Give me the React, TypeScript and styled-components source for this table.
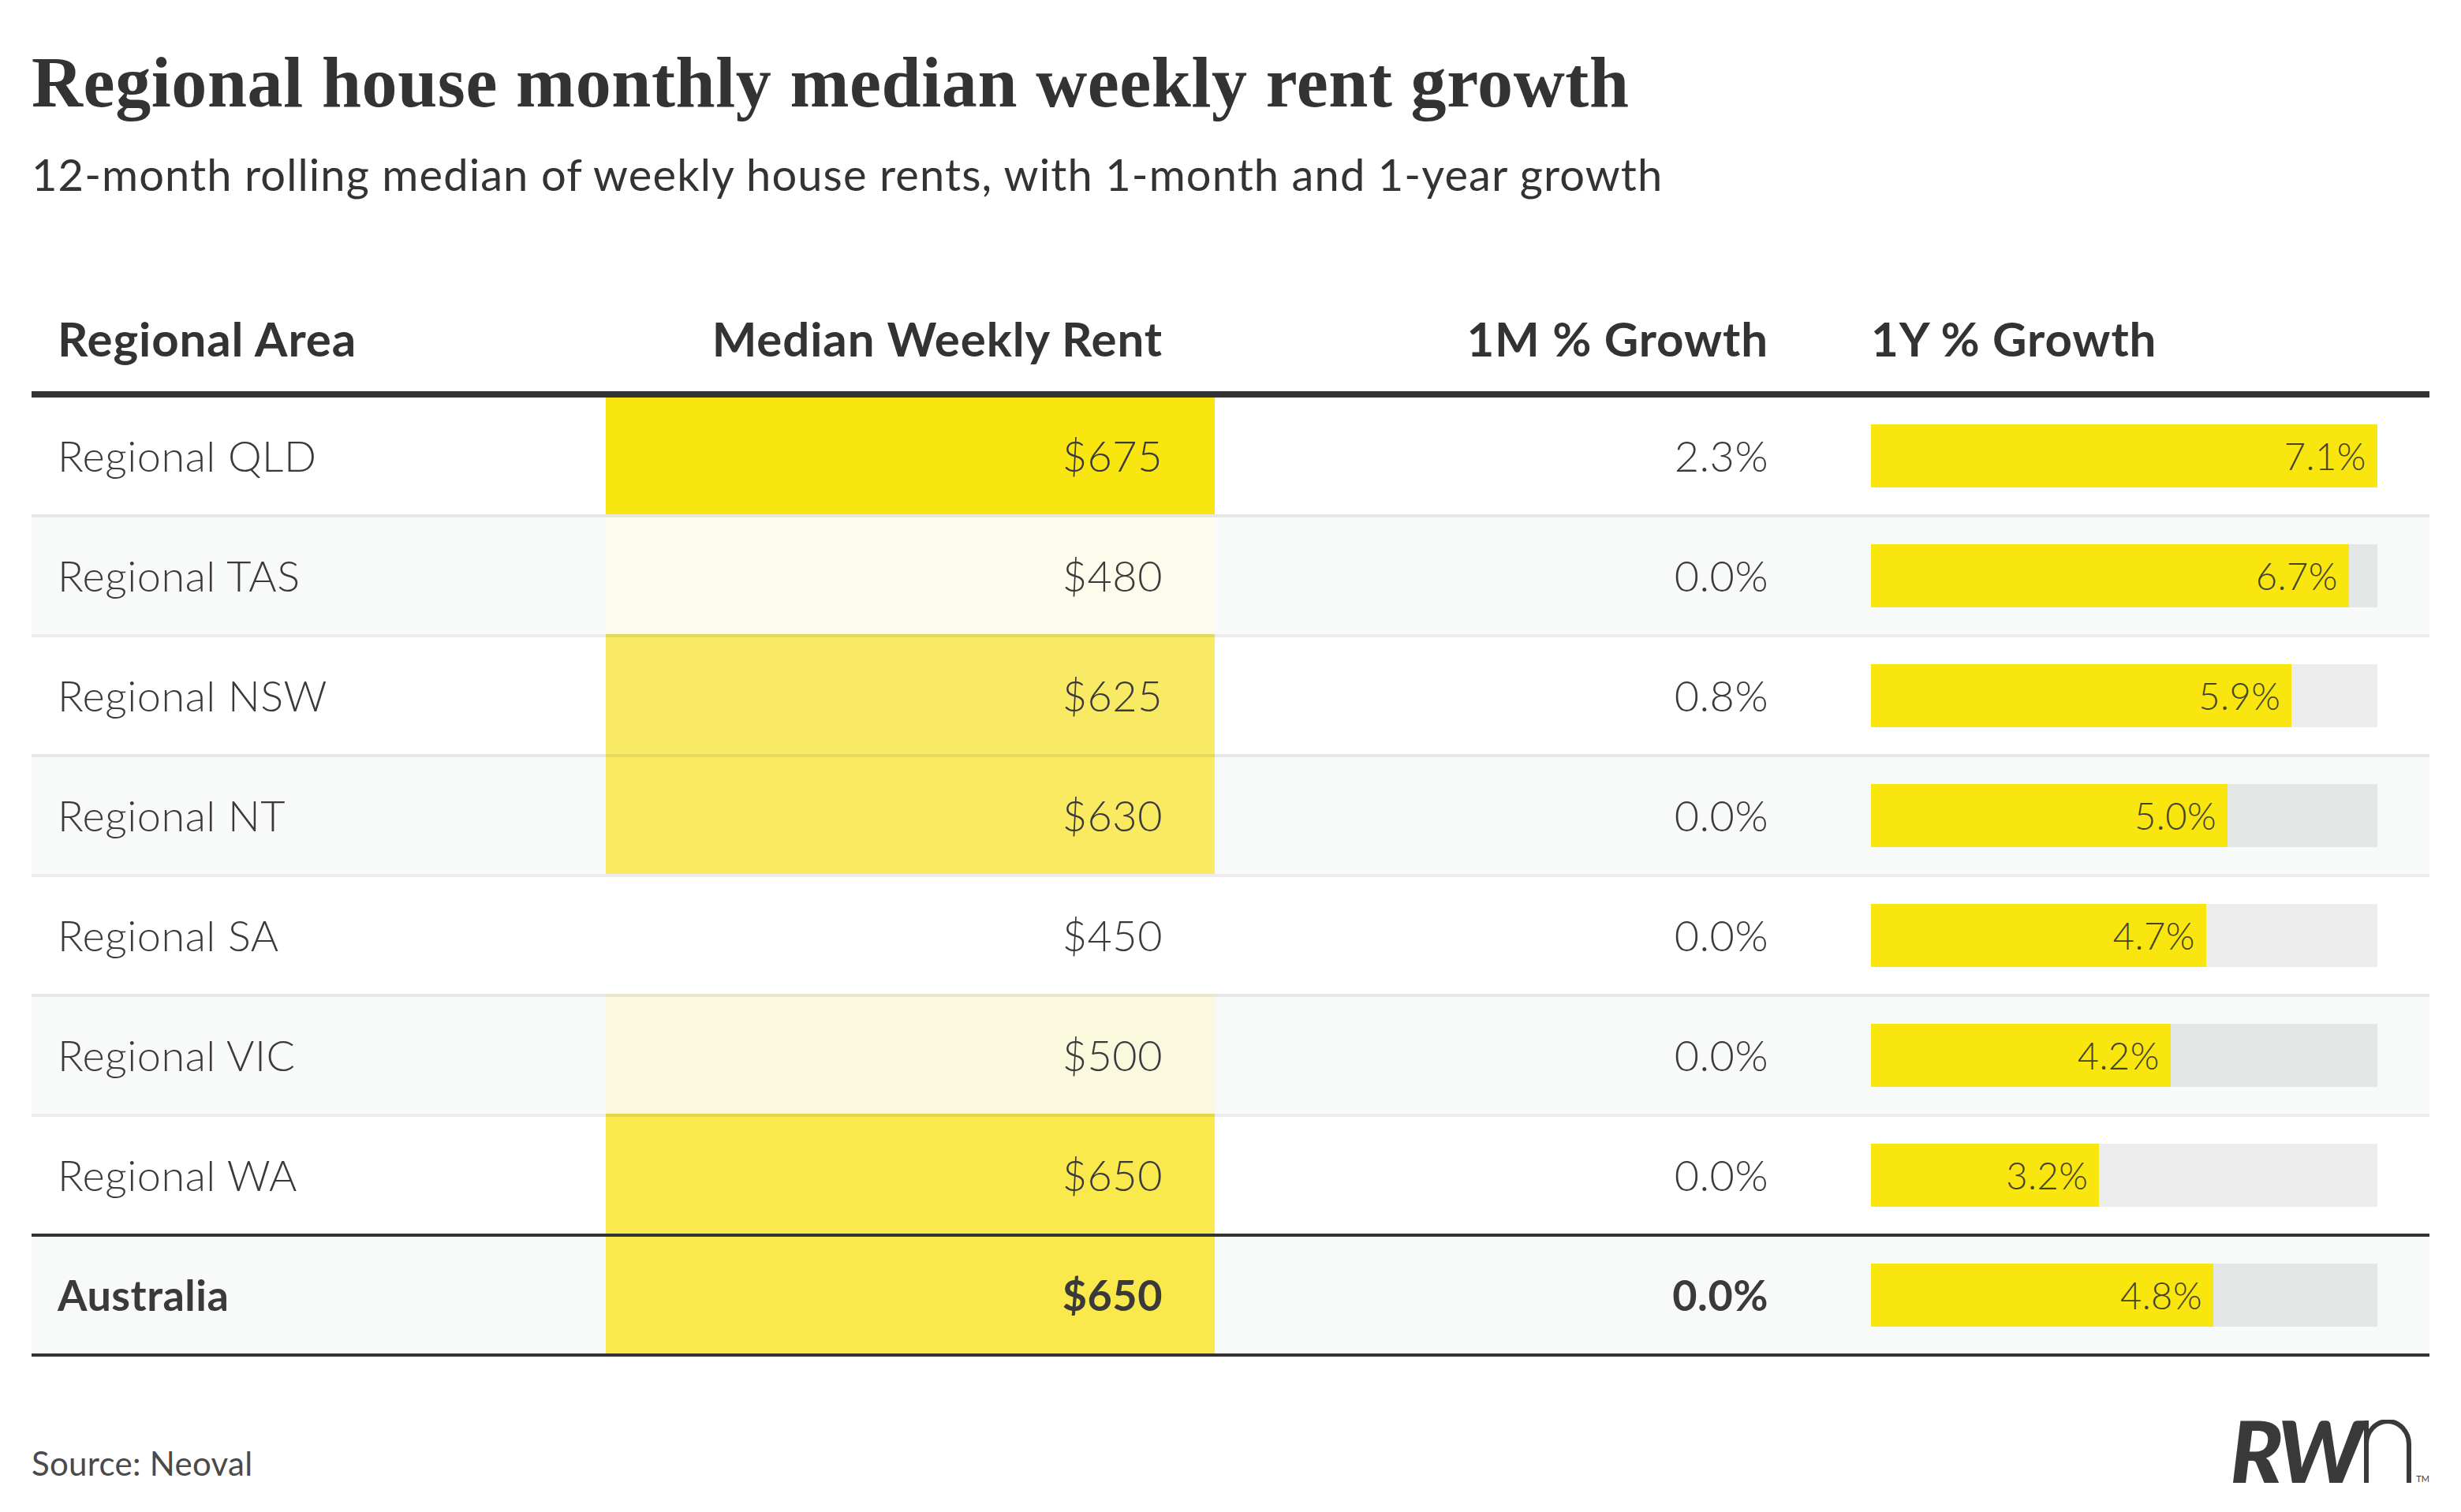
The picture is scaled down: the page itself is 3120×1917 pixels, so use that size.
import React from "react";
import styled, { createGlobalStyle } from "styled-components";

const GlobalStyle = createGlobalStyle`
  html, body {
    margin: 0;
    padding: 0;
    background: #ffffff;
  }
`;

const Page = styled.div`
  width: 3120px;
  box-sizing: border-box;
  padding: 60px 40px 0;
  color: #333333;
  font-family: Lato, "Noto Sans", sans-serif;
`;

const Title = styled.h1`
  margin: 0;
  font-family: "Liberation Serif", "DejaVu Serif", serif;
  font-weight: 700;
  font-size: 90px;
  line-height: 1;
  letter-spacing: 0.6px;
  color: #333333;
`;

const Subtitle = styled.p`
  margin: 43px 0 0;
  font-size: 56px;
  font-weight: 400;
  line-height: 1;
  letter-spacing: 1.1px;
  color: #333333;
`;

const Table = styled.div`
  margin-top: 150px;
  display: flex;
  flex-direction: column;
`;

const COLUMNS = "728px 772px 768px 772px";

const HeaderRow = styled.div`
  display: grid;
  grid-template-columns: ${COLUMNS};
  border-bottom: 8px solid #333333;
`;

const HeaderCell = styled.div<{ $align: "left" | "right"; $first?: boolean }>`
  padding: 0 66px 37px ${(p) => (p.$first ? "33px" : "64px")};
  text-align: ${(p) => p.$align};
  font-size: 60px;
  font-weight: 700;
  line-height: 1;
  letter-spacing: 0.9px;
  color: #333333;
`;

const Row = styled.div<{ $shaded: boolean; $closing: boolean }>`
  display: grid;
  grid-template-columns: ${COLUMNS};
  background: ${(p) => (p.$shaded ? "#f8f9f9" : "#ffffff")};
  ${(p) => (p.$closing ? "border-bottom: 4px solid #333333;" : "")}
`;

type Divider = "none" | "light" | "dark";

const Cell = styled.div<{
  $align: "left" | "right";
  $first?: boolean;
  $bold?: boolean;
  $divider: Divider;
  $heat?: string;
}>`
  box-sizing: border-box;
  height: ${(p) => (p.$divider === "none" ? "148px" : "152px")};
  display: flex;
  align-items: center;
  justify-content: ${(p) => (p.$align === "right" ? "flex-end" : "flex-start")};
  padding: 0 66px 0 ${(p) => (p.$first ? "33px" : "64px")};
  border-top: ${(p) =>
    p.$divider === "none"
      ? "0"
      : p.$divider === "dark"
      ? "4px solid #333333"
      : "4px solid rgba(0, 0, 0, 0.075)"};
  background: ${(p) => p.$heat ?? "transparent"};
  font-size: 54px;
  font-weight: ${(p) => (p.$bold ? 700 : 300)};
  line-height: 1;
  letter-spacing: 0.5px;
  color: #3a3a3a;
  white-space: nowrap;
`;

const BarTrack = styled.div`
  width: 644px;
  height: 80px;
  display: flex;
  background: rgba(0, 0, 0, 0.075);
`;

const BarFill = styled.div`
  height: 100%;
  display: flex;
  align-items: center;
  justify-content: flex-end;
  box-sizing: border-box;
  padding-right: 14px;
  background: #f9e60f;
  font-size: 47px;
  font-weight: 300;
  line-height: 1;
  color: #45432a;
`;

const Footer = styled.div`
  margin-top: 80px;
  display: flex;
  justify-content: space-between;
  align-items: flex-end;
`;

const Source = styled.div`
  margin-bottom: 4px;
  font-size: 42px;
  font-weight: 400;
  line-height: 1;
  letter-spacing: 0.3px;
  color: #4a4a4a;
`;

const Logo = styled.div`
  display: flex;
  align-items: flex-end;
  height: 80px;
  color: #3a3a3a;
`;

const LogoLetters = styled.span`
  display: block;
  height: 80px;
  margin-top: -6px;
  font-family: Lato, sans-serif;
  font-size: 112px;
  font-weight: 900;
  font-style: italic;
  line-height: 80px;
  letter-spacing: -6px;
`;

const LogoArch = styled.svg`
  display: block;
  margin-left: 6px;
`;

const LogoMark = styled.span`
  margin-left: 5px;
  font-size: 11px;
  font-weight: 400;
  line-height: 1;
`;

type RowData = {
  area: string;
  rent: string;
  heat?: string;
  month: string;
  year: number;
};

const ROWS: RowData[] = [
  { area: "Regional QLD", rent: "$675", heat: "#f9e50f", month: "2.3%", year: 7.1 },
  { area: "Regional TAS", rent: "$480", heat: "#fdfbeb", month: "0.0%", year: 6.7 },
  { area: "Regional NSW", rent: "$625", heat: "#f9ea66", month: "0.8%", year: 5.9 },
  { area: "Regional NT", rent: "$630", heat: "#f9ea62", month: "0.0%", year: 5.0 },
  { area: "Regional SA", rent: "$450", month: "0.0%", year: 4.7 },
  { area: "Regional VIC", rent: "$500", heat: "#fbf9dd", month: "0.0%", year: 4.2 },
  { area: "Regional WA", rent: "$650", heat: "#f9e94d", month: "0.0%", year: 3.2 },
];

const TOTAL: RowData = {
  area: "Australia",
  rent: "$650",
  heat: "#f9e94d",
  month: "0.0%",
  year: 4.8,
};

const MAX_GROWTH = 7.1;

const Bar = ({ value }: { value: number }) => (
  <BarTrack>
    <BarFill style={{ width: `${(value / MAX_GROWTH) * 100}%` }}>
      {value.toFixed(1)}%
    </BarFill>
  </BarTrack>
);

const TableRow = ({
  row,
  shaded,
  divider,
  bold,
}: {
  row: RowData;
  shaded: boolean;
  divider: Divider;
  bold?: boolean;
}) => (
  <Row $shaded={shaded} $closing={!!bold}>
    <Cell $align="left" $first $bold={bold} $divider={divider}>
      {row.area}
    </Cell>
    <Cell $align="right" $bold={bold} $divider={divider} $heat={row.heat}>
      {row.rent}
    </Cell>
    <Cell $align="right" $bold={bold} $divider={divider}>
      {row.month}
    </Cell>
    <Cell $align="left" $divider={divider}>
      <Bar value={row.year} />
    </Cell>
  </Row>
);

const App = () => (
  <>
    <GlobalStyle />
    <Page>
      <Title>Regional house monthly median weekly rent growth</Title>
      <Subtitle>
        12-month rolling median of weekly house rents, with 1-month and 1-year growth
      </Subtitle>

      <Table>
        <HeaderRow>
          <HeaderCell $align="left" $first>
            Regional Area
          </HeaderCell>
          <HeaderCell $align="right">Median Weekly Rent</HeaderCell>
          <HeaderCell $align="right">1M % Growth</HeaderCell>
          <HeaderCell $align="left">1Y % Growth</HeaderCell>
        </HeaderRow>
        {ROWS.map((row, i) => (
          <TableRow
            key={row.area}
            row={row}
            shaded={i % 2 === 1}
            divider={i === 0 ? "none" : "light"}
          />
        ))}
        <TableRow row={TOTAL} shaded divider="dark" bold />
      </Table>

      <Footer>
        <Source>Source: Neoval</Source>
        <Logo>
          <LogoLetters>RW</LogoLetters>
          <LogoArch width="62" height="80" viewBox="0 0 62 80">
            <path
              d="M4 80 V1 M4 31 A27 29 0 0 1 58 31 V80"
              fill="none"
              stroke="currentColor"
              strokeWidth="6"
            />
          </LogoArch>
          <LogoMark>TM</LogoMark>
        </Logo>
      </Footer>
    </Page>
  </>
);

export default App;
